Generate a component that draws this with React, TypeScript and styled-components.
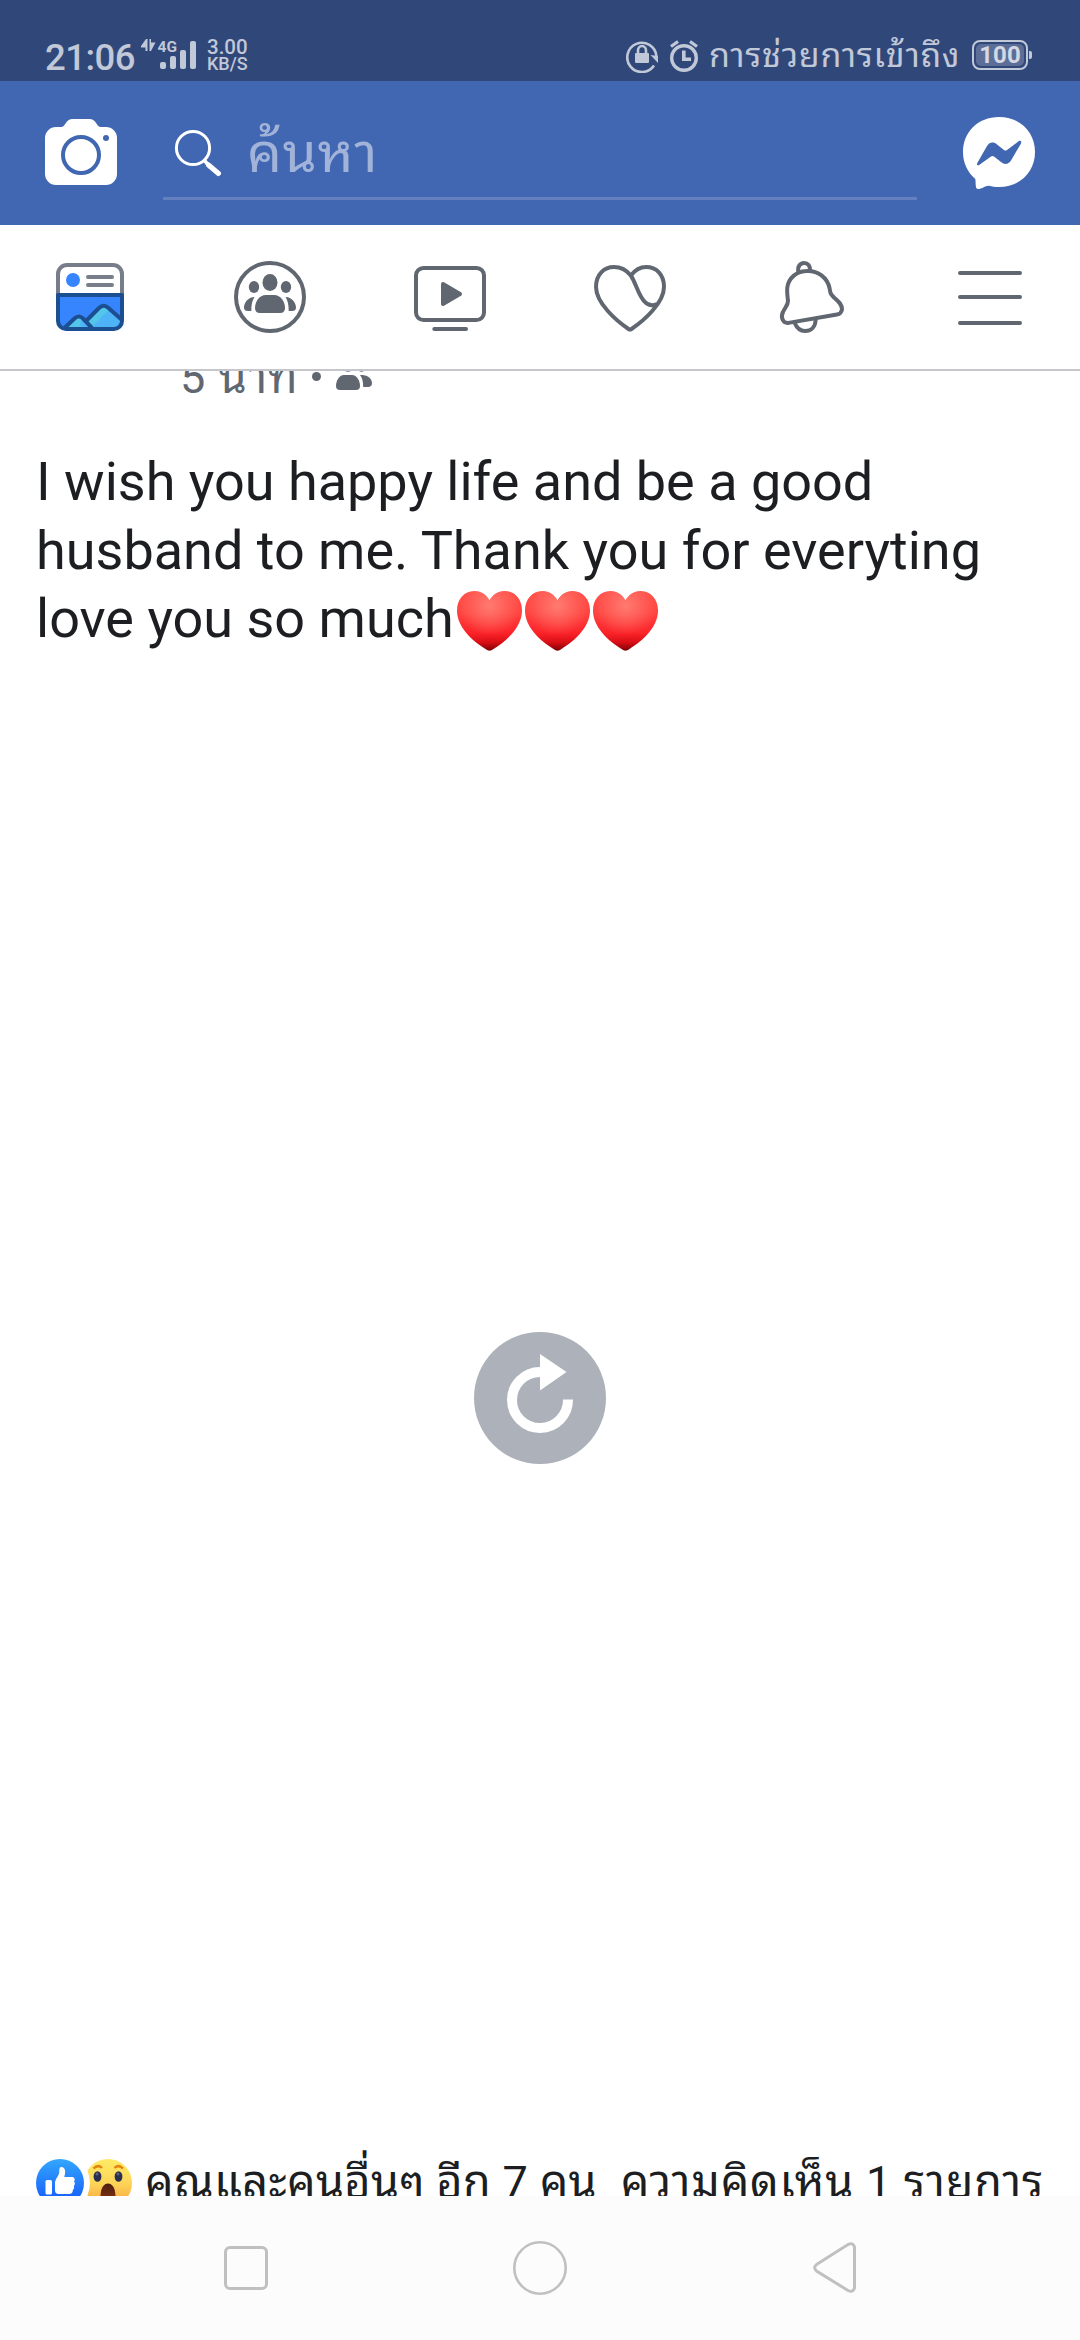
import React from "react";
import styled, { createGlobalStyle } from "styled-components";

const GlobalStyle = createGlobalStyle`
  * { box-sizing: border-box; }
  html, body { margin: 0; padding: 0; background: #fff; }
  svg { display: block; flex: none; }
`;

const Screen = styled.div`
  width: 1080px;
  height: 2340px;
  display: flex;
  flex-direction: column;
  overflow: hidden;
  background: #fff;
  color: #1c1e21;
  font-family: Roboto, "Noto Sans Thai Looped", "Noto Sans", sans-serif;
`;

const StatusBar = styled.div`
  height: 81px;
  flex: none;
  display: flex;
  justify-content: space-between;
  align-items: flex-start;
  padding: 39px 48px 0 45px;
  background: #30477a;
  color: #c1c8d7;
`;

const StatusGroup = styled.div<{ $gap?: number }>`
  display: flex;
  align-items: flex-start;
  height: 34px;
  gap: ${(p) => p.$gap ?? 0}px;
`;

const Clock = styled.span`
  width: 96px;
  font-size: 36.5px;
  line-height: 37px;
  font-weight: 500;
  letter-spacing: -0.5px;
`;

const NetSpeed = styled.div`
  display: flex;
  flex-direction: column;
  margin-left: 10px;
  font-weight: 500;
  white-space: nowrap;
`;

const SpeedValue = styled.span`
  font-size: 20.5px;
  line-height: 17px;
`;

const SpeedUnit = styled.span`
  font-size: 18px;
  line-height: 16px;
`;

const Carrier = styled.span`
  width: 249px;
  margin-left: 11px;
  margin-right: 14px;
  font-size: 34px;
  line-height: 33px;
  letter-spacing: 0.75px;
  white-space: nowrap;
`;

const Battery = styled.div`
  display: flex;
  align-items: center;
  margin-top: 1px;
`;

const BatteryCase = styled.div`
  width: 56px;
  height: 30px;
  padding: 2px;
  border: 2px solid #c1c8d7;
  border-radius: 8px;
`;

const BatteryFill = styled.div`
  height: 22px;
  border-radius: 5px;
  background: #5c6e97;
  color: #d3d8e3;
  font-size: 24px;
  font-weight: 700;
  line-height: 23px;
  text-align: center;
`;

const BatteryTip = styled.div`
  width: 3px;
  height: 8px;
  margin-left: 1px;
  border-radius: 0 2px 2px 0;
  background: #c1c8d7;
`;

const AppBar = styled.header`
  height: 144px;
  flex: none;
  display: flex;
  align-items: flex-start;
  justify-content: space-between;
  padding: 36px 45px 0;
  background: #4267b2;
`;

const SearchField = styled.div`
  width: 754px;
  height: 83px;
  display: flex;
  align-items: flex-start;
  gap: 25px;
  padding: 12px 0 0 11px;
  border-bottom: 3px solid #6580be;
`;

const SearchHint = styled.span`
  font-size: 55px;
  line-height: 54px;
  margin-top: -3px;
  letter-spacing: 0.6px;
  color: #a1b3d9;
  white-space: nowrap;
`;

const TabBar = styled.nav`
  height: 146px;
  flex: none;
  display: grid;
  grid-template-columns: repeat(6, 1fr);
  align-items: start;
  justify-items: center;
  padding-top: 36px;
  border-bottom: 2px solid #c6c6cd;
  background: #fff;
`;

const Feed = styled.main`
  height: 1825px;
  flex: none;
  display: flex;
  flex-direction: column;
  overflow: hidden;
`;

const PostMeta = styled.div`
  height: 54px;
  margin-top: -20px;
  margin-left: 180px;
  flex: none;
  display: flex;
  align-items: flex-start;
  color: #606770;
  font-size: 45px;
  line-height: 54px;
  white-space: nowrap;
`;

const MetaTime = styled.span`
  width: 132px;
  letter-spacing: 1.2px;
`;

const MetaDot = styled.span`
  width: 9px;
  height: 9px;
  margin: 21px 15px 0 0;
  border-radius: 50%;
  background: #606770;
`;

const PostText = styled.p`
  margin: 43px 36px 0;
  height: 206px;
  flex: none;
  font-size: 54px;
  line-height: 68.5px;
  white-space: nowrap;
`;

const TextLine = styled.span`
  display: flex;
  align-items: flex-start;
`;

const HeartRow = styled.span`
  display: inline-flex;
  gap: 3px;
  margin: 6px 0 0 3px;
`;

const PhotoPlaceholder = styled.div`
  flex: 1;
  display: flex;
  justify-content: center;
  padding-top: 678px;
`;

const Feedback = styled.div`
  height: 37px;
  flex: none;
  display: flex;
  align-items: flex-start;
  justify-content: space-between;
  padding: 0 36px;
  font-size: 45px;
  line-height: 54px;
  white-space: nowrap;
`;

const Reactions = styled.div`
  display: flex;
  align-items: flex-start;
  gap: 13px;
`;

const FeedbackText = styled.span<{ $tracking: number }>`
  margin-top: -3px;
  letter-spacing: ${(p) => p.$tracking}px;
`;

const SystemNav = styled.div`
  height: 144px;
  flex: none;
  display: flex;
  justify-content: space-between;
  align-items: center;
  padding: 0 219px;
  background: #fcfcfc;
`;

const ink = "#606770";

const SignalIcon = () => (
  <svg width="56" height="32" viewBox="0 0 56 32">
    <g fill="#c1c8d7">
      <path d="M0 7 L5 0 H6.500 V12 H4.500 V8.500 H0Z" />
      <path d="M8.500 0 H10 V3.500 H14.500 L10 12 H8.500Z" />
      <text x="16.500" y="12.700" fontFamily="Roboto, sans-serif" fontSize="15.500" fontWeight="700">4G</text>
      <rect x="19" y="23" width="6" height="7" rx="2" />
      <rect x="29" y="17" width="6" height="13" rx="2" />
      <rect x="39" y="11" width="6" height="19" rx="2" />
      <rect x="49" y="2" width="6" height="28" rx="2" />
    </g>
  </svg>
);

const RotationLockIcon = () => (
  <svg width="32" height="34" viewBox="0 0 32 34">
    <path d="M28 26.500 A14.600 14.600 0 1 1 30.400 17" fill="none" stroke="#c1c8d7" strokeWidth="2.600" />
    <path d="M24.500 16 L32 17 V24Z" fill="#c1c8d7" />
    <path d="M12 15 V11.500 A4 4.500 0 0 1 20 11.500 V15" fill="none" stroke="#c1c8d7" strokeWidth="2.600" />
    <rect x="9" y="14" width="14" height="10" rx="1" fill="#c1c8d7" />
  </svg>
);

const AlarmIcon = () => (
  <svg width="28" height="34" viewBox="0 0 28 34" fill="none" stroke="#c1c8d7">
    <circle cx="14" cy="19" r="12.300" strokeWidth="3.400" />
    <path d="M1 7.500 L8 2.500 M27 7.500 L20 2.500" strokeWidth="3.200" />
    <path d="M13.800 11.500 V20.300 H21" strokeWidth="3.600" />
  </svg>
);

const CameraIcon = () => (
  <svg width="72" height="72" viewBox="0 0 72 72">
    <path
      d="M11 10 H16 C21 10 20 2 28 2 H44 C52 2 51 10 56 10 H61 A11 11 0 0 1 72 21 V57 A11 11 0 0 1 61 68 H11 A11 11 0 0 1 0 57 V21 A11 11 0 0 1 11 10Z"
      fill="#fff"
    />
    <circle cx="36" cy="38" r="18" fill="none" stroke="#4267b2" strokeWidth="4" />
    <circle cx="61" cy="21" r="3" fill="#4267b2" />
  </svg>
);

const SearchIcon = () => (
  <svg width="48" height="48" viewBox="0 0 48 48" fill="none" stroke="#fff" strokeLinecap="round">
    <circle cx="19" cy="19" r="16.600" strokeWidth="3" />
    <path d="M30.500 31.500 L36 38" strokeWidth="3.500" />
    <path d="M34.500 36 L44.500 44.500" strokeWidth="5" />
  </svg>
);

const MessengerIcon = () => (
  <svg width="72" height="72" viewBox="0 0 72 72">
    <path
      d="M36 0 C57 0 72 15 72 35 C72 55 57 70 36 70 C32 70 29 69.600 26 68.700 C22 68.500 19 72 15 72 C12 72 13 66 12.300 62 C4.500 55 0 46 0 35 C0 15 15 0 36 0Z"
      fill="#fff"
    />
    <path
      d="M14.300 46 L24 29 C26.500 25 30.500 24.500 34 27.500 L41 33 Q42.500 34.200 44 33 L55.500 24.300 C57.500 23 58.800 24.500 58 26.500 L48 43.500 C45.500 47.500 41.500 48 38 45 L31 39.500 Q29.500 38.300 28 39.500 L16.500 47.800 C14.800 49 13.300 48 14.300 46Z"
      fill="#4267b2"
    />
  </svg>
);

const FeedIcon = () => (
  <svg width="72" height="72" viewBox="0 0 72 72" fill="none">
    <path d="M4 34 V13 A9 9 0 0 1 13 4 H59 A9 9 0 0 1 68 13 V34" stroke="#777d8a" strokeWidth="4" />
    <circle cx="19" cy="19" r="7" fill="#3784ff" />
    <path d="M34 16 H58 M34 24 H58" stroke="#777d8a" strokeWidth="4" strokeLinecap="round" />
    <path d="M4 34 H68 V60 A8 8 0 0 1 60 68 H12 A8 8 0 0 1 4 60Z" fill="#3784ff" />
    <path d="M32 60 L45 47 Q49.700 43 54 47 L68 59.500 V60 A8 8 0 0 1 60 68 H38Z" fill="#4fb3f7" />
    <path d="M32 60 L45 47 Q49.700 43 54 47 C55 53 48 53 46 58 C45 62 40 61 38 68Z" fill="#53c6ea" />
    <path d="M12 67 L21 57 Q25 54 28.500 57 L38 67Z" fill="#53c6ea" />
    <path d="M29 57.500 L38 67 H28 C25 64 26 62 29 57.500Z" fill="#4fb3f7" />
    <g stroke="#1c4f91" strokeWidth="4">
      <path d="M32 60 L45 47 Q49.700 42.500 54.500 47 L67.500 58.500" />
      <path d="M11 66.500 L20.500 57.500 Q25 53.500 29 57.500 L38 67" />
      <path d="M4 34 H68 V60 A8 8 0 0 1 60 68 H12 A8 8 0 0 1 4 60Z" strokeLinejoin="round" />
    </g>
  </svg>
);

const GroupsIcon = () => (
  <svg width="72" height="72" viewBox="0 0 72 72" fill={ink}>
    <circle cx="36" cy="36" r="34" fill="none" stroke={ink} strokeWidth="4" />
    <ellipse cx="36" cy="21.500" rx="7.500" ry="8.500" />
    <ellipse cx="20" cy="26" rx="5.200" ry="6" />
    <ellipse cx="52" cy="26" rx="5.200" ry="6" />
    <path d="M32 34 H40 C47 34 51 41 51 47 Q51 52 46 52 H26 Q21 52 21 47 C21 41 25 34 32 34Z" />
    <path d="M20.500 36 C14 36 10 42 10 46.500 Q10 50 14 50 H17.300 C17.300 44 18 40 20.500 36Z" />
    <path d="M51.500 36 C58 36 62 42 62 46.500 Q62 50 58 50 H54.700 C54.700 44 54 40 51.500 36Z" />
  </svg>
);

const WatchIcon = () => (
  <svg width="72" height="72" viewBox="0 0 72 72" fill="none" stroke={ink} strokeWidth="4">
    <rect x="2" y="7" width="68" height="52" rx="7.500" />
    <path d="M20.300 68 H52" strokeLinecap="round" />
    <path d="M29 23 L46 33 L29 43Z" fill={ink} strokeLinejoin="round" />
  </svg>
);

const DatingIcon = () => (
  <svg width="72" height="72" viewBox="0 0 72 72" fill="none" stroke={ink} strokeWidth="4">
    <path
      d="M36.800 14.500 C32.500 9 27 6 20 6 C10 6 2 13.500 2 25.700 C2 42 22 59.500 34.500 68 Q36 69 37.500 68 C50 59.500 70 42 70 25.700 C70 13.500 62.500 6 52 6 C45.500 6 41 9 36.800 14.500 C41.500 21 44.500 35 50.500 40.500 C54 44.500 59 44.800 63 43"
      strokeLinejoin="round"
    />
  </svg>
);

const BellIcon = () => (
  <svg width="72" height="72" viewBox="0 0 72 72" fill="none" stroke={ink} strokeWidth="4">
    <path d="M14.500 61.900 C8.500 62.500 6.500 56 9 51 C11 46.500 14 44 14 40 C13.500 35 12.800 31 13.300 26.500 C14.500 17 22.500 10.500 32 10 C44 9 53.500 17 55.500 27 C56.300 32 56.500 33 60 36.500 C64.500 40.500 68.300 43.500 68 48.500 C67.500 51.500 66.500 53 63 53.500Z" strokeLinejoin="round" />
    <path d="M24.500 11.500 C23 6 26 2 30 2 C34 2 36.300 5 36 9.500" />
    <path d="M20.700 62 C23 67.500 27 70 31 70 C37 70 41.500 66 41.700 58.500" />
  </svg>
);

const MenuIcon = () => (
  <svg width="72" height="72" viewBox="0 0 72 72" fill="none" stroke={ink} strokeWidth="4" strokeLinecap="round">
    <path d="M6 12 H66 M6 36 H66 M6 62 H66" />
  </svg>
);

const AudienceIcon = () => (
  <svg width="36" height="46" viewBox="0 4 36 46" fill={ink}>
    <ellipse cx="12" cy="17.500" rx="6.500" ry="7.300" />
    <ellipse cx="25.500" cy="18" rx="5.500" ry="6.700" />
    <path d="M8 28 H16 C21 28 24 34 24 39 Q24 43 20 43 H4 Q0 43 0 39 C0 34 3 28 8 28Z" />
    <path d="M24 28 H26 C32 28 36 32 36 36 Q36 40 32 40 H27.200 C27.200 35 26.500 31 24 28Z" />
  </svg>
);

const HeartEmoji = ({ id }: { id: string }) => (
  <svg width="65" height="60" viewBox="0 0 65 60">
    <defs>
      <linearGradient id={`${id}-base`} x1="0" y1="0" x2="0" y2="1">
        <stop offset="0" stopColor="#ff4a45" />
        <stop offset="0.350" stopColor="#ff4340" />
        <stop offset="0.700" stopColor="#fb2429" />
        <stop offset="0.860" stopColor="#d90f16" />
        <stop offset="1" stopColor="#7c0003" />
      </linearGradient>
      <radialGradient id={`${id}-glow`} cx="0.500" cy="0.240" r="0.500">
        <stop offset="0" stopColor="#ff7b70" />
        <stop offset="1" stopColor="#ff7b70" stopOpacity="0" />
      </radialGradient>
    </defs>
    {["base", "glow"].map((layer) => (
      <path
        key={layer}
        d="M32.500 9.500 C29 3.500 24 0 17.500 0 C7 0 0 8.500 0 19.500 C0 36 15 49.500 28.500 58 Q32.500 61.500 36.500 58 C50 49.500 65 36 65 19.500 C65 8.500 58 0 47.500 0 C41 0 36 3.500 32.500 9.500Z"
        fill={`url(#${id}-${layer})`}
      />
    ))}
  </svg>
);

const RetryIcon = () => (
  <svg width="132" height="132" viewBox="0 0 132 132">
    <circle cx="66" cy="66" r="66" fill="#adb1ba" />
    <path d="M94 67.500 A28 28 0 1 1 66 40" fill="none" stroke="#fff" strokeWidth="10" />
    <path d="M66 22 L92.500 40 L66 58.500Z" fill="#fff" />
  </svg>
);

const ReactionIcons = () => (
  <svg width="96" height="48" viewBox="0 0 96 48">
    <defs>
      <linearGradient id="like" x1="0" y1="0" x2="0" y2="1">
        <stop offset="0" stopColor="#33a7fd" />
        <stop offset="1" stopColor="#1353fa" />
      </linearGradient>
      <linearGradient id="wow" x1="0" y1="0" x2="0" y2="1">
        <stop offset="0" stopColor="#ffeb66" />
        <stop offset="0.500" stopColor="#fdd558" />
        <stop offset="1" stopColor="#f5a03c" />
      </linearGradient>
      <linearGradient id="mouth" x1="0" y1="0" x2="0" y2="1">
        <stop offset="0" stopColor="#4a1e12" />
        <stop offset="1" stopColor="#9c3a10" />
      </linearGradient>
    </defs>
    <circle cx="72" cy="24" r="24" fill="url(#wow)" />
    <path d="M57.500 9.500 Q62 5 66 9 M78.500 9 Q82.500 5 87 9.500" fill="none" stroke="#e2850f" strokeWidth="2.400" />
    <ellipse cx="61.500" cy="17.500" rx="3.900" ry="5.300" fill="#2b2f4d" />
    <ellipse cx="82.500" cy="17.500" rx="3.900" ry="5.300" fill="#2b2f4d" />
    <ellipse cx="61" cy="15" rx="1.400" ry="1.600" fill="#5a6180" />
    <ellipse cx="82" cy="15" rx="1.400" ry="1.600" fill="#5a6180" />
    <ellipse cx="72" cy="36" rx="7.500" ry="11.500" fill="url(#mouth)" />
    <circle cx="24" cy="24" r="30" fill="#fff" />
    <circle cx="24" cy="24" r="24" fill="url(#like)" />
    <rect x="9.500" y="21" width="6.500" height="14.500" rx="1.500" fill="#fff" />
    <path d="M19 24 C19 20 23 17 23.300 13 C23 10 23.500 8 25.500 8 C29 8 29.500 12 29 14.500 L28.300 18 H36 C38.500 18 39.500 20.500 38 22.500 C39.500 24 39 26 37.800 27 C38.500 28.500 38 30 36.800 31 C37 33.500 35.500 35 33 35 H23 C20.500 35 19 34 19 31.500Z" fill="#fff" />
  </svg>
);

const NavSquare = () => (
  <svg width="54" height="54" viewBox="0 0 54 54">
    <rect x="6.500" y="6.500" width="41" height="41" rx="4.500" fill="none" stroke="#c0c0c0" strokeWidth="3" />
  </svg>
);

const NavCircle = () => (
  <svg width="54" height="54" viewBox="0 0 54 54">
    <circle cx="27" cy="27" r="25.700" fill="none" stroke="#c0c0c0" strokeWidth="2.600" />
  </svg>
);

const NavBack = () => (
  <svg width="54" height="54" viewBox="-3 0 54 54">
    <path
      d="M6.500 23.500 L38 3.500 Q43 1 44.500 6 V47 Q43 52 38 49.500 L6.500 30 Q3 26.700 6.500 23.500Z"
      fill="none"
      stroke="#c0c0c0"
      strokeWidth="3"
    />
  </svg>
);

export default function App() {
  return (
    <>
      <GlobalStyle />
      <Screen>
        <StatusBar>
          <StatusGroup>
            <Clock>21:06</Clock>
            <SignalIcon />
            <NetSpeed>
              <SpeedValue>3.00</SpeedValue>
              <SpeedUnit>KB/S</SpeedUnit>
            </NetSpeed>
          </StatusGroup>
          <StatusGroup>
            <StatusGroup $gap={12}>
              <RotationLockIcon />
              <AlarmIcon />
            </StatusGroup>
            <Carrier>การช่วยการเข้าถึง</Carrier>
            <Battery>
              <BatteryCase>
                <BatteryFill>100</BatteryFill>
              </BatteryCase>
              <BatteryTip />
            </Battery>
          </StatusGroup>
        </StatusBar>
        <AppBar>
          <CameraIcon />
          <SearchField>
            <SearchIcon />
            <SearchHint>ค้นหา</SearchHint>
          </SearchField>
          <MessengerIcon />
        </AppBar>
        <TabBar>
          <FeedIcon />
          <GroupsIcon />
          <WatchIcon />
          <DatingIcon />
          <BellIcon />
          <MenuIcon />
        </TabBar>
        <Feed>
          <PostMeta>
            <MetaTime>5 นาที</MetaTime>
            <MetaDot />
            <AudienceIcon />
          </PostMeta>
          <PostText>
            <TextLine>I wish you happy life and be a good</TextLine>
            <TextLine>husband to me. Thank you for everyting</TextLine>
            <TextLine>
              love you so much
              <HeartRow>
                <HeartEmoji id="h1" />
                <HeartEmoji id="h2" />
                <HeartEmoji id="h3" />
              </HeartRow>
            </TextLine>
          </PostText>
          <PhotoPlaceholder>
            <RetryIcon />
          </PhotoPlaceholder>
          <Feedback>
            <Reactions>
              <ReactionIcons />
              <FeedbackText $tracking={0.35}>คุณและคนอื่นๆ อีก 7 คน</FeedbackText>
            </Reactions>
            <FeedbackText $tracking={0.8}>ความคิดเห็น 1 รายการ</FeedbackText>
          </Feedback>
        </Feed>
        <SystemNav>
          <NavSquare />
          <NavCircle />
          <NavBack />
        </SystemNav>
      </Screen>
    </>
  );
}
